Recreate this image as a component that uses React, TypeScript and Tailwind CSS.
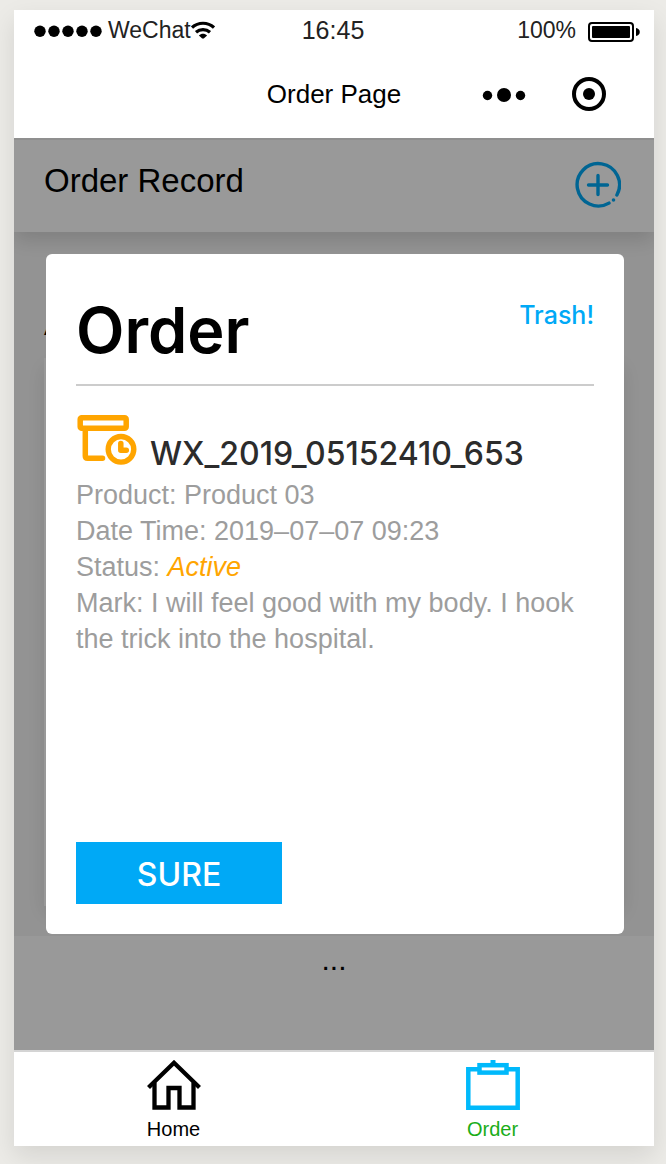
import React from "react";

function SignalDots() {
  return (
    <svg className="ml-2" width="68" height="14" viewBox="0 0 68 14" aria-hidden="true">
      {[6, 20, 34, 48, 62].map((cx) => (
        <circle key={cx} cx={cx} cy="8.300" r="5.700" />
      ))}
    </svg>
  );
}

function WifiIcon() {
  return (
    <svg width="24" height="18" viewBox="0 0 24 18" fill="none" stroke="#000" aria-hidden="true">
      <path d="M1 6.500C7.200 0.800 16.800 0.800 23 6.500" strokeWidth="3.200" />
      <path d="M5 11.300C9 7.700 15 7.700 19 11.300" strokeWidth="3.200" />
      <path d="M7.900 14.400C10.400 12.300 13.600 12.300 16.100 14.400L12.800 17.600H11.200Z" fill="#000" stroke="none" />
    </svg>
  );
}

function BatteryIcon() {
  return (
    <svg width="52" height="24" viewBox="0 -4 52 24" aria-hidden="true">
      <rect x="1" y="1" width="44" height="18" rx="3" fill="none" stroke="#000" strokeWidth="2" />
      <rect x="4" y="4" width="38" height="12" rx="1" />
      <path d="M48 6C53 6.500 53 13.500 48 14Z" />
    </svg>
  );
}

function StatusBar() {
  return (
    <div className="flex h-10 items-center pl-3 pr-[14px] text-[#222]">
      <div className="flex flex-1 items-center">
        <SignalDots />
        <span className="ml-[6px] text-[23px] leading-8">WeChat</span>
        <WifiIcon />
      </div>
      <span className="text-[25px] leading-8">16:45</span>
      <div className="flex flex-1 items-center justify-end gap-3">
        <span className="text-[23px] leading-8">100%</span>
        <BatteryIcon />
      </div>
    </div>
  );
}

function NavBar() {
  return (
    <div className="grid h-[88px] grid-cols-[1fr_auto_1fr] items-center">
      <h1 className="col-start-2 text-[26px] leading-8">Order Page</h1>
      <div className="flex items-center justify-end gap-[46px] pr-12">
        <button type="button" aria-label="More">
          <svg className="block" width="44" height="16" viewBox="0 0 44 16">
            <circle cx="5.500" cy="9.500" r="4.700" />
            <circle cx="22" cy="9" r="7" />
            <circle cx="38.500" cy="9.500" r="4.700" />
          </svg>
        </button>
        <button type="button" aria-label="Close">
          <svg className="block" width="34" height="34" viewBox="0 0 34 34">
            <circle cx="17" cy="17" r="15" fill="none" stroke="#000" strokeWidth="4" />
            <circle cx="17" cy="17" r="6" />
          </svg>
        </button>
      </div>
    </div>
  );
}

function RecordsPage() {
  return (
    <div className="flex flex-1 flex-col">
      <header className="relative flex h-[94px] items-start justify-between border-t-2 border-[#eee] bg-white pl-[30px] pr-[33px] pt-[21px] shadow-[0_8px_20px_rgba(0,0,0,0.14)]">
        <h2 className="text-[33px] leading-10">Order Record</h2>
        <button type="button" aria-label="Add order">
          <svg className="block" width="46" height="48" viewBox="0 0 46 48" fill="none" stroke="#00a9f6" strokeWidth="3.400" strokeLinecap="round">
            <path d="M41.900 34A21.200 21.200 0 1 0 34 42.100" />
            <path d="M13.500 24H32.500M23 14.500V33.500" />
            <circle cx="38.500" cy="39" r="1.800" fill="#00a9f6" stroke="none" />
          </svg>
        </button>
      </header>
      <section className="flex flex-1 flex-col bg-[#f6f6f6] pb-[30px] pl-[30px] pr-[30px] pt-[72px]">
        <h3 className="text-[33px] leading-10">A</h3>
        <div className="mt-[14px] flex-1 bg-white shadow-[0_8px_20px_rgba(0,0,0,0.1)]" />
      </section>
      <div className="h-[114px] bg-white pt-1 text-center text-[30px] leading-10">...</div>
    </div>
  );
}

function ParcelClockIcon() {
  return (
    <svg className="shrink-0" width="62" height="52" viewBox="0 0 62 52" fill="none" stroke="#ffa500" strokeLinecap="round" strokeLinejoin="round" aria-hidden="true">
      <rect x="4.200" y="3.800" width="46" height="10.400" rx="1.500" strokeWidth="5.500" />
      <path d="M9.300 16V42Q9.300 44.300 11.600 44.300H26.500" strokeWidth="5.500" />
      <circle cx="45" cy="35.300" r="12.800" strokeWidth="5.400" />
      <path d="M44.800 29.500V36.300H50.300" strokeWidth="5.500" />
    </svg>
  );
}

function OrderDialog() {
  return (
    <div
      role="dialog"
      aria-modal="true"
      aria-labelledby="order-title"
      className="flex min-h-[680px] w-full flex-col rounded-md bg-white px-[30px] pb-[30px] pt-11"
    >
      <div className="flex items-start justify-between border-b-2 border-[#ccc] pb-[22px]">
        <h2 id="order-title" className="font-['Inter',sans-serif] text-[63px] font-semibold leading-[64px]">
          Order
        </h2>
        <button type="button" className="pt-px font-['Inter',sans-serif] text-[25px] font-medium leading-8 text-[#00a9f6]">
          Trash!
        </button>
      </div>
      <div className="mt-7 flex items-end gap-3">
        <ParcelClockIcon />
        <h3 className="font-['Inter',sans-serif] text-[32px] font-medium leading-6 text-[#2c2c2c]">WX_2019_05152410_653</h3>
      </div>
      <div className="mt-[11px] text-[27px] leading-9 text-[#9d9d9d]">
        <p>Product: Product 03</p>
        <p>Date Time: 2019–07–07 09:23</p>
        <p>
          Status: <em className="text-[#ffa500]">Active</em>
        </p>
        <p>Mark: I will feel good with my body. I hook the trick into the hospital.</p>
      </div>
      <button
        type="button"
        className="mt-auto h-[62px] w-[206px] bg-[#00a9f6] pt-1 font-['Inter',sans-serif] text-[32px] font-medium leading-none text-white"
      >
        SURE
      </button>
    </div>
  );
}

function TabBar() {
  return (
    <nav className="grid h-24 grid-cols-2 border-t-2 border-[#d4d4d4] bg-white pr-0.5 text-[20px] leading-6">
      <a href="#home" className="flex flex-col items-center pt-2">
        <svg width="54" height="50" viewBox="0 0 54 50" fill="none" stroke="#000" strokeWidth="4.300" aria-hidden="true">
          <path d="M1.500 27.500L27 2.800L52.500 27.500" />
          <path d="M7.500 22.500V47.500H21.500V28H32.500V47.500H46.500V22.500" />
        </svg>
        <span className="mt-[7px]">Home</span>
      </a>
      <a href="#order" aria-current="page" className="flex flex-col items-center pt-2 text-[#1aad19]">
        <svg width="54" height="50" viewBox="0 0 54 50" fill="none" stroke="#00b9fb" strokeWidth="4.500" aria-hidden="true">
          <path d="M13 9.200H2.300V47.700H51.700V9.200H41" />
          <rect x="13.500" y="5.200" width="27" height="7.400" />
          <path d="M27 0V5" strokeWidth="5" />
        </svg>
        <span className="mt-[7px]">Order</span>
      </a>
    </nav>
  );
}

export default function App() {
  return (
    <div className="flex min-h-screen flex-col bg-[#ecebe7] pb-[18px] pl-[14px] pr-3 pt-[10px] font-['Liberation_Sans',Arial,sans-serif] text-black">
      <div className="flex flex-1 flex-col bg-white shadow-[0_10px_24px_rgba(0,0,0,0.1)]">
        <StatusBar />
        <NavBar />
        <main className="relative flex flex-1 flex-col overflow-hidden">
          <RecordsPage />
          <div className="absolute inset-0 flex items-center bg-black/40 pl-8 pr-[30px]">
            <OrderDialog />
          </div>
        </main>
        <TabBar />
      </div>
    </div>
  );
}
